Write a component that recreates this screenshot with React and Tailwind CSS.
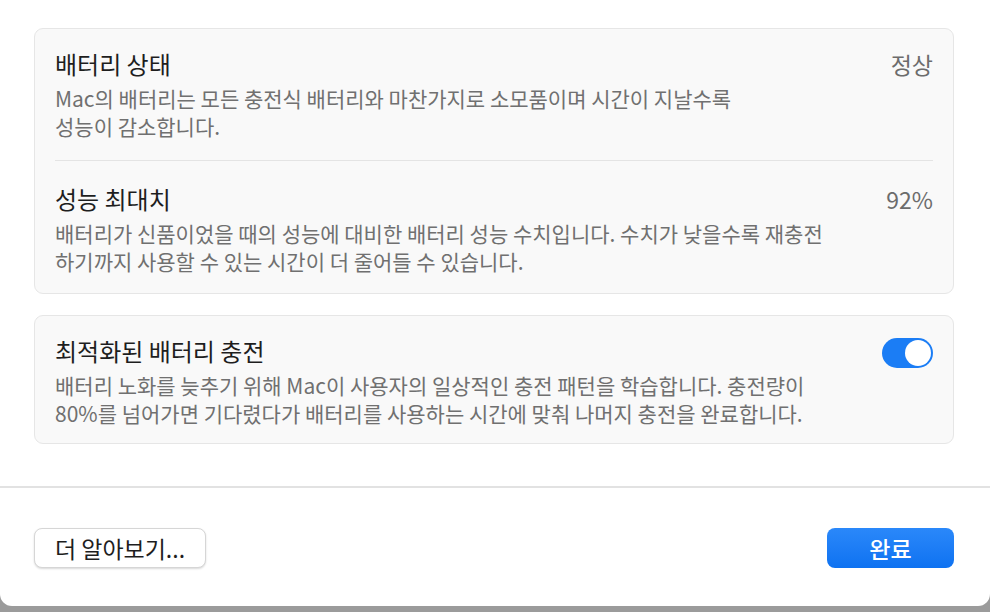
import React from 'react';

const Row = ({ title, value, lines, right }) => (
  <div className="flex items-start justify-between">
    <div>
      <div className="text-[24px] leading-[28px] text-[#1e1e1e]">{title}</div>
      <div className="mt-[6px] text-[21px] leading-[28px] text-[#707070] whitespace-nowrap">
        {lines.map((l, i) => (
          <div key={i}>{l}</div>
        ))}
      </div>
    </div>
    {value && <div className="text-[23px] leading-[28px] text-[#6c6c6c]">{value}</div>}
    {right}
  </div>
);

const Toggle = () => (
  <div className="mt-[1px] w-[51px] h-[30px] rounded-full bg-[#1b7df5] p-[2px] flex justify-end">
    <div className="w-[26px] h-[26px] rounded-full bg-white"></div>
  </div>
);

export default function App() {
  return (
    <div
      className="w-[990px] h-[612px] bg-[#9b9b9b]"
      style={{ fontFamily: '"Noto Sans CJK KR", "Noto Sans", sans-serif' }}
    >
      <div className="h-[606px] bg-white rounded-b-[12px] flex flex-col">
        <div className="h-[486px] pl-[34px] pr-[36px] pt-[28px] flex flex-col gap-[21px]">
          <div className="rounded-[9px] border border-[#e6e6e6] bg-[#f9f9f9] px-[20px]">
            <div className="pt-[21px] pb-[20px] border-b border-[#e4e4e4]">
              <Row
                title="배터리 상태"
                value="정상"
                lines={[
                  'Mac의 배터리는 모든 충전식 배터리와 마찬가지로 소모품이며 시간이 지날수록',
                  '성능이 감소합니다.',
                ]}
              />
            </div>
            <div className="pt-[24px] pb-[18px]">
              <Row
                title="성능 최대치"
                value="92%"
                lines={[
                  '배터리가 신품이었을 때의 성능에 대비한 배터리 성능 수치입니다. 수치가 낮을수록 재충전',
                  '하기까지 사용할 수 있는 시간이 더 줄어들 수 있습니다.',
                ]}
              />
            </div>
          </div>
          <div className="rounded-[9px] border border-[#e6e6e6] bg-[#f9f9f9] px-[20px] pt-[21px] pb-[16px]">
            <Row
              title="최적화된 배터리 충전"
              lines={[
                '배터리 노화를 늦추기 위해 Mac이 사용자의 일상적인 충전 패턴을 학습합니다. 충전량이',
                '80%를 넘어가면 기다렸다가 배터리를 사용하는 시간에 맞춰 나머지 충전을 완료합니다.',
              ]}
              right={<Toggle />}
            />
          </div>
        </div>
        <div className="border-t-2 border-[#e2e2e2] pl-[34px] pr-[36px] pt-[40px] flex justify-between">
          <button className="h-[40px] w-[172px] rounded-[8px] bg-white border border-[#d6d6d6] shadow-[0_1px_2px_rgba(0,0,0,0.15)] text-[23px] leading-[28px] text-[#1e1e1e]">
            더 알아보기...
          </button>
          <button className="h-[40px] w-[127px] rounded-[8px] bg-gradient-to-b from-[#2a88fa] to-[#0d72f1] text-[23px] leading-[28px] font-medium text-white">
            완료
          </button>
        </div>
      </div>
    </div>
  );
}
